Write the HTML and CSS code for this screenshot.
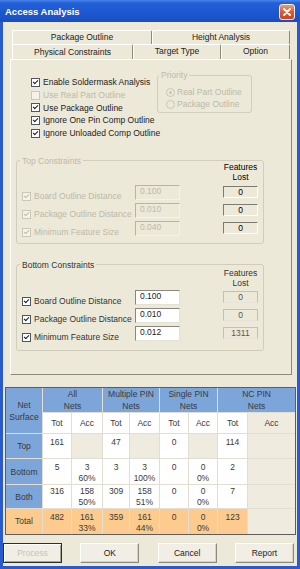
FILE: index.html
```html
<!DOCTYPE html>
<html lang="en">
  <head>
    <meta charset="UTF-8" />
    <meta name="viewport" content="width=device-width, initial-scale=1.0" />
    <title>Access Analysis</title>
    <link rel="stylesheet" href="styles.css">
  </head>
  <body>
    <div class="window">
      <div class="titlebar">
        <span class="title">Access Analysis</span>
        <span class="close">
          <svg width="10" height="10" viewBox="0 0 10 10"><path d="M2 2 L8 8 M8 2 L2 8" stroke="#fff" stroke-width="2" stroke-linecap="round"/></svg>
        </span>
      </div>
      <div class="frame">
        <div class="tabs">
          <div class="tabrow back">
            <div class="tab w-pkg">Package Outline</div>
            <div class="tab w-height">Height Analysis</div>
          </div>
          <div class="tabrow front">
            <div class="tab w-phys active">Physical Constraints</div>
            <div class="tab w-target">Target Type</div>
            <div class="tab w-option">Option</div>
          </div>
        </div>

        <div class="panel">
          <div class="options">
            <div class="checklist">
              <div class="check"><span class="box on"></span>Enable Soldermask Analysis</div>
              <div class="check off"><span class="box"></span>Use Real Part Outline</div>
              <div class="check"><span class="box on"></span>Use Package Outline</div>
              <div class="check"><span class="box on"></span>Ignore One Pin Comp Outline</div>
              <div class="check"><span class="box on"></span>Ignore Unloaded Comp Outline</div>
            </div>
            <fieldset class="priority">
              <legend>Priority</legend>
              <div class="priority-body">
                <div class="radio"><span class="dot on"></span>Real Part Outline</div>
                <div class="radio"><span class="dot"></span>Package Outline</div>
              </div>
            </fieldset>
          </div>

          <fieldset class="group group-top disabled">
            <legend>Top Constraints</legend>
            <div class="group-body">
              <div class="features-head"><span>Features<br>Lost</span></div>
              <div class="row-label"><span class="box on"></span>Board Outline Distance</div>
              <input class="num" type="text" value="0.100" disabled>
              <div class="lost">0</div>
              <div class="row-label"><span class="box on"></span>Package Outline Distance</div>
              <input class="num" type="text" value="0.010" disabled>
              <div class="lost">0</div>
              <div class="row-label"><span class="box on"></span>Minimum Feature Size</div>
              <input class="num" type="text" value="0.040" disabled>
              <div class="lost">0</div>
            </div>
          </fieldset>

          <fieldset class="group group-bottom">
            <legend>Bottom Constraints</legend>
            <div class="group-body">
              <div class="features-head"><span>Features<br>Lost</span></div>
              <div class="row-label"><span class="box on"></span>Board Outline Distance</div>
              <input class="num" type="text" value="0.100">
              <div class="lost">0</div>
              <div class="row-label"><span class="box on"></span>Package Outline Distance</div>
              <input class="num" type="text" value="0.010">
              <div class="lost">0</div>
              <div class="row-label"><span class="box on"></span>Minimum Feature Size</div>
              <input class="num" type="text" value="0.012">
              <div class="lost">1311</div>
            </div>
          </fieldset>
        </div>

        <table class="nets">
          <colgroup>
            <col style="width:37px"><col style="width:29px"><col style="width:31px">
            <col style="width:27px"><col style="width:30px"><col style="width:29px">
            <col style="width:29px"><col style="width:30px"><col style="width:47px">
          </colgroup>
          <tr class="r-head">
            <td class="blue" rowspan="2">Net<br>Surface</td>
            <td class="blue" colspan="2">All<br>Nets</td>
            <td class="blue" colspan="2">Multiple PIN<br>Nets</td>
            <td class="blue" colspan="2">Single PIN<br>Nets</td>
            <td class="blue last" colspan="2">NC PIN<br>Nets</td>
          </tr>
          <tr class="r-sub">
            <td>Tot</td><td>Acc</td><td>Tot</td><td>Acc</td>
            <td>Tot</td><td>Acc</td><td>Tot</td><td class="empty last">Acc</td>
          </tr>
          <tr class="r-top">
            <td class="blue side">Top</td>
            <td>161</td><td class="empty"></td>
            <td>47</td><td class="empty"></td>
            <td>0</td><td class="empty"></td>
            <td>114</td><td class="empty last"></td>
          </tr>
          <tr class="r-bottom">
            <td class="blue side">Bottom</td>
            <td>5</td><td>3<br>60%</td>
            <td>3</td><td>3<br>100%</td>
            <td>0</td><td>0<br>0%</td>
            <td>2</td><td class="empty last"></td>
          </tr>
          <tr class="r-both">
            <td class="blue side">Both</td>
            <td>316</td><td>158<br>50%</td>
            <td>309</td><td>158<br>51%</td>
            <td>0</td><td>0<br>0%</td>
            <td>7</td><td class="empty last"></td>
          </tr>
          <tr class="r-total">
            <td class="side">Total</td>
            <td>482</td><td>161<br>33%</td>
            <td>359</td><td>161<br>44%</td>
            <td>0</td><td>0<br>0%</td>
            <td>123</td><td class="empty last"></td>
          </tr>
        </table>

        <div class="buttons">
          <button class="btn default" disabled>Process</button>
          <button class="btn">OK</button>
          <button class="btn">Cancel</button>
          <button class="btn">Report</button>
        </div>
      </div>
    </div>
  </body>
</html>
```

FILE: styles.css
```css
html,
body {
  margin: 0;
  background-color: #ece9d8;
  font-family: "Liberation Sans", Arial, sans-serif;
  font-size: 8.5px;
  color: #000;
}

.window {
  width: 300px;
  height: 569px;
  display: flex;
  flex-direction: column;
}

/* title bar */
.titlebar {
  flex: none;
  height: 22px;
  box-sizing: border-box;
  display: flex;
  align-items: center;
  justify-content: space-between;
  padding: 1px 5px 0 5px;
  background: linear-gradient(to bottom, #4a84ea 0, #2360d8 3px, #1c57cf 60%, #1a4ec2 100%);
  color: #fff;
}
.title {
  font-size: 9.5px;
  font-weight: bold;
}
.close {
  width: 16px;
  height: 16px;
  box-sizing: border-box;
  border: 1px solid #f4f0ea;
  border-radius: 3px;
  background: linear-gradient(to bottom, #ee9a74, #dc5a2e 50%, #cc4520);
  display: flex;
  align-items: center;
  justify-content: center;
}

.frame {
  flex: 1;
  border: 3px solid #2a5bcd;
  border-top: 0;
  background-color: #ece9d8;
}

/* tabs */
.tabs {
  margin: 8px 7px 0 9px;
}
.tabrow {
  display: flex;
}
.tabrow.back {
  height: 14px;
}
.tabrow.front {
  height: 15px;
}
.tab {
  box-sizing: border-box;
  border-left: 1px solid #fff;
  border-top: 1px solid #fff;
  border-right: 1px solid #8d8a7c;
  border-radius: 2px 2px 0 0;
  text-align: center;
  line-height: 13px;
  white-space: nowrap;
  color: #222;
}
.tab.active {
  line-height: 14px;
}
.w-pkg { width: 140px; }
.w-height { width: 138px; }
.w-phys { width: 121px; }
.w-target { width: 88px; }
.w-option { width: 69px; }

.panel {
  height: 316px;
  box-sizing: border-box;
  margin: 0 5px 0 7px;
  border: 1px solid;
  border-color: #fff #8d8a7c #8d8a7c #fff;
  padding: 10px 0 0 5px;
}

/* options */
.options {
  display: flex;
  align-items: flex-start;
}
.checklist {
  flex: none;
  width: 126px;
  margin: 6px 0 0 15px;
  white-space: nowrap;
  color: #222;
}
.check {
  display: flex;
  align-items: center;
  line-height: 12.8px;
}
.check.off {
  color: #bdb9a9;
}
.box {
  flex: none;
  width: 7px;
  height: 7px;
  border: 1px solid #4d5663;
  background-color: #fff;
  margin-right: 3px;
  display: inline-flex;
  align-items: center;
  justify-content: center;
}
.box.on::after {
  content: "";
  width: 2px;
  height: 4px;
  margin-top: -2px;
  border: solid #1b1b1b;
  border-width: 0 1.5px 1.5px 0;
  transform: rotate(45deg);
}
.check.off .box {
  border-color: #cac7b8;
  background-color: #f4f2ea;
}

fieldset {
  margin: 0;
  padding: 0;
  border: 1px solid #d0cdbd;
  border-radius: 3px;
}
legend {
  padding: 0 2px;
  line-height: 10px;
}

.priority {
  width: 95px;
  height: 43px;
  box-sizing: border-box;
  color: #bdb9a9;
}
.priority legend {
  margin-left: 1px;
}
.priority-body {
  padding: 6px 0 0 8px;
}
.radio {
  display: flex;
  align-items: center;
  line-height: 12px;
  white-space: nowrap;
}
.dot {
  flex: none;
  width: 7px;
  height: 7px;
  border: 1px solid #cac7b8;
  border-radius: 50%;
  margin-right: 2px;
  display: inline-flex;
  align-items: center;
  justify-content: center;
}
.dot.on::after {
  content: "";
  width: 3px;
  height: 3px;
  border-radius: 50%;
  background-color: #cac7b8;
}

/* constraint groups */
.group {
  width: 248px;
  box-sizing: border-box;
  color: #333;
}
.group legend {
  margin-left: 3px;
}
.group-top {
  margin-top: 16px;
}
.group-bottom {
  margin-top: 16px;
}
.group-body {
  display: grid;
  grid-template-columns: 113px 45px 1fr 35px;
  grid-template-rows: 16px;
  grid-auto-rows: 15px;
  row-gap: 3px;
  padding: 0 5px 7px 5px;
}
.group-bottom .group-body {
  grid-template-rows: 17px;
  padding-bottom: 9px;
}
.features-head {
  grid-column: 1 / -1;
  height: 20px;
  margin-top: -4px;
  line-height: 10px;
}
.features-head span {
  display: block;
  width: 35px;
  margin-left: auto;
  text-align: center;
  white-space: nowrap;
}
.group-bottom .features-head {
  margin-top: -2px;
}
.row-label {
  grid-column: 1;
  display: flex;
  align-items: center;
  height: 15px;
  margin: 4px 0 -4px 0;
  white-space: nowrap;
}
.num {
  grid-column: 2;
  width: 45px;
  height: 15px;
  box-sizing: border-box;
  margin: 0;
  padding: 0 0 2px 4px;
  font-family: inherit;
  font-size: 8.5px;
  color: #222;
  background-color: #fff;
  border: 1px solid;
  border-color: #8a877c #e4e1d5 #e4e1d5 #8a877c;
  outline: none;
}
.lost {
  grid-column: 4;
  height: 12px;
  margin-top: 1px;
  box-sizing: border-box;
  line-height: 11px;
  text-align: center;
  border: 1px solid;
  border-color: #c4c1b3 #c4c1b3 #e6e3d8 #c4c1b3;
  color: #555;
}

.disabled {
  color: #bdb9a9;
}
.disabled .row-label {
  color: #bdb9a9;
}
.disabled .box {
  border-color: #cac7b8;
  background-color: #f4f2ea;
}
.disabled .box.on::after {
  border-color: #c0bcac;
}
.disabled .num {
  background-color: #ece9d8;
  color: #bdb9a9;
  border-color: #b7b4a6 #f4f2ea #f4f2ea #b7b4a6;
}
.disabled .lost {
  color: #000;
  border-color: #7e7b70 #fff #fff #7e7b70;
}
.disabled .features-head {
  color: #000;
}

/* nets table */
.nets {
  width: 291px;
  margin: 12px 1px 0 2px;
  table-layout: fixed;
  border-collapse: separate;
  border-spacing: 0;
  border: 1px solid #5d5d5d;
  background-color: #fff;
  color: #3a3a3a;
}
.nets td {
  padding: 3px 0 0 0;
  border-right: 1px solid #e2ded2;
  border-bottom: 1px solid #e2ded2;
  text-align: center;
  vertical-align: top;
  line-height: 11px;
  white-space: nowrap;
  overflow: hidden;
}
.nets td.last {
  border-right: 0;
}
.nets tr.r-total td {
  border-bottom: 0;
}
.nets .blue {
  background-color: #7ca5da;
  vertical-align: middle;
  padding: 0;
  line-height: 12px;
}
.nets .side {
  vertical-align: middle;
  padding: 0;
}
.nets .empty {
  background-color: #efebdf;
}
.r-head { height: 25px; }
.r-sub { height: 21px; }
.r-sub td {
  vertical-align: middle;
  padding: 0;
}
.r-top { height: 25px; }
.r-bottom { height: 24px; }
.r-both { height: 23px; }
.r-total { height: 24px; }
.r-both td {
  padding-top: 1px;
}
.r-total td {
  background-color: #fccb8d;
}
.r-total td.empty {
  background-color: #efebdf;
}

/* buttons */
.buttons {
  display: flex;
  justify-content: space-between;
  margin: 8px 3px 0 0;
}
.btn {
  width: 59px;
  height: 20px;
  margin: 0;
  padding: 0;
  font-family: inherit;
  font-size: 8.5px;
  color: #222;
  background-color: #f1efe5;
  border: 1px solid;
  border-color: #fff #8d8a7c #8d8a7c #fff;
  box-shadow: inset -1px -1px 0 #d6d3c6;
}
.btn.default {
  border: 1px solid #2e2e2e;
  box-shadow: inset 1px 1px 0 #fff, inset -1px -1px 0 #a7a497;
  color: #c8c5b6;
}
```
